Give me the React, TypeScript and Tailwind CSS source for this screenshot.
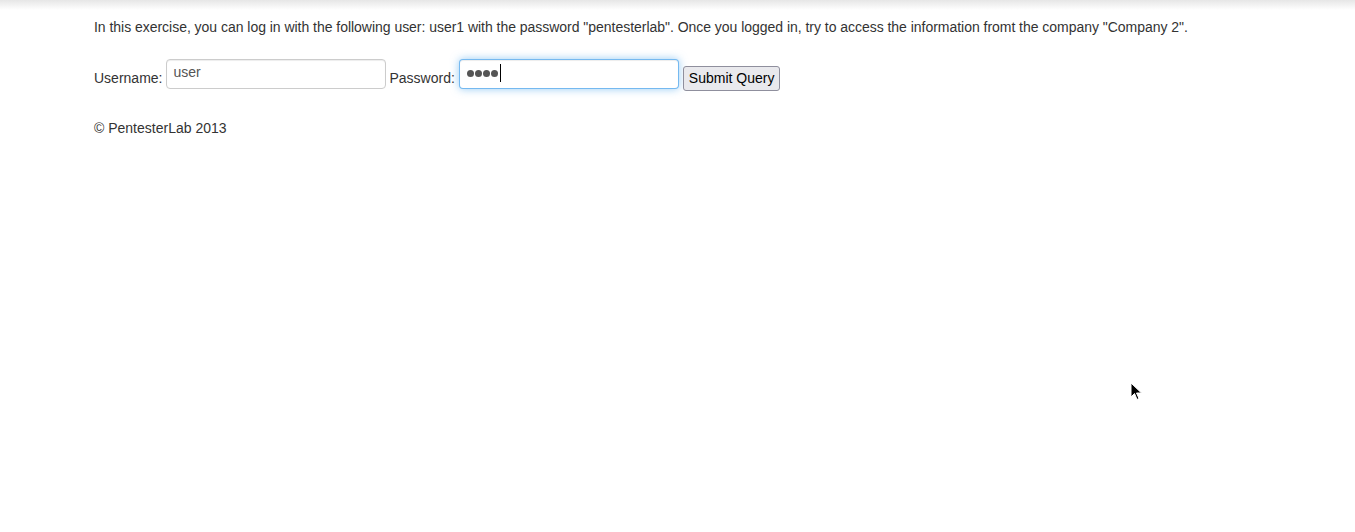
import React from 'react';

const App = () => {
  return (
    <div
      className="relative min-h-[532px] bg-white text-[14px] leading-[20px] text-[#333]"
      style={{ fontFamily: '"Liberation Sans", Arial, Helvetica, sans-serif' }}
    >
      {/* navbar shadow at top */}
      <div className="h-[10px] bg-gradient-to-b from-[#e6e6e6] to-white" />

      <div className="pl-[94px]">
        <p className="mt-[7px] tracking-[-0.03px]">
          In this exercise, you can log in with the following user: user1 with the password "pentesterlab". Once you logged in, try to access the information fromt the company "Company 2".
        </p>

        <form className="mt-[22px] mb-[27px] flex items-start gap-1" onSubmit={(e) => e.preventDefault()}>
          <label className="mt-[9px]">Username:</label>
          <input
            type="text"
            defaultValue="user"
            className="h-[30px] w-[220px] rounded-[4px] border border-[#ccc] bg-white px-[6px] pb-[6px] pt-[2px] text-[14px] leading-[20px] text-[#555] shadow-[inset_0_1px_1px_rgba(0,0,0,0.075)] outline-none"
          />
          <label className="-ml-px mt-[9px]">Password:</label>
          <div className="flex h-[30px] w-[220px] items-center gap-[1px] rounded-[4px] border border-[rgba(82,168,236,0.8)] bg-white px-[7px] pb-[2px] shadow-[inset_0_1px_1px_rgba(0,0,0,0.075),0_0_8px_rgba(82,168,236,0.6)]">
            <span className="h-[7px] w-[7px] rounded-full bg-[#555]" />
            <span className="h-[7px] w-[7px] rounded-full bg-[#555]" />
            <span className="h-[7px] w-[7px] rounded-full bg-[#555]" />
            <span className="h-[7px] w-[7px] rounded-full bg-[#555]" />
            <span className="ml-[1px] h-[18px] w-px bg-black" />
          </div>
          <button
            type="submit"
            className="mt-[7px] h-[25px] rounded-[3px] border border-[#8f8f9d] bg-[#e9e9ed] px-[5px] pb-[2px] text-[14px] leading-[20px] text-black"
          >
            Submit Query
          </button>
        </form>

        <footer>
          <p>© PentesterLab 2013</p>
        </footer>
      </div>

      {/* mouse pointer */}
      <svg className="absolute left-[1130px] top-[382px]" width="13" height="20" viewBox="0 0 13 20">
        <path d="M1 1 L1 15 L4.5 11.5 L7 17.5 L9 16.5 L6.5 11 L11.5 11 Z" fill="#000" stroke="#fff" strokeWidth="1" />
      </svg>
    </div>
  );
};

export default App;
